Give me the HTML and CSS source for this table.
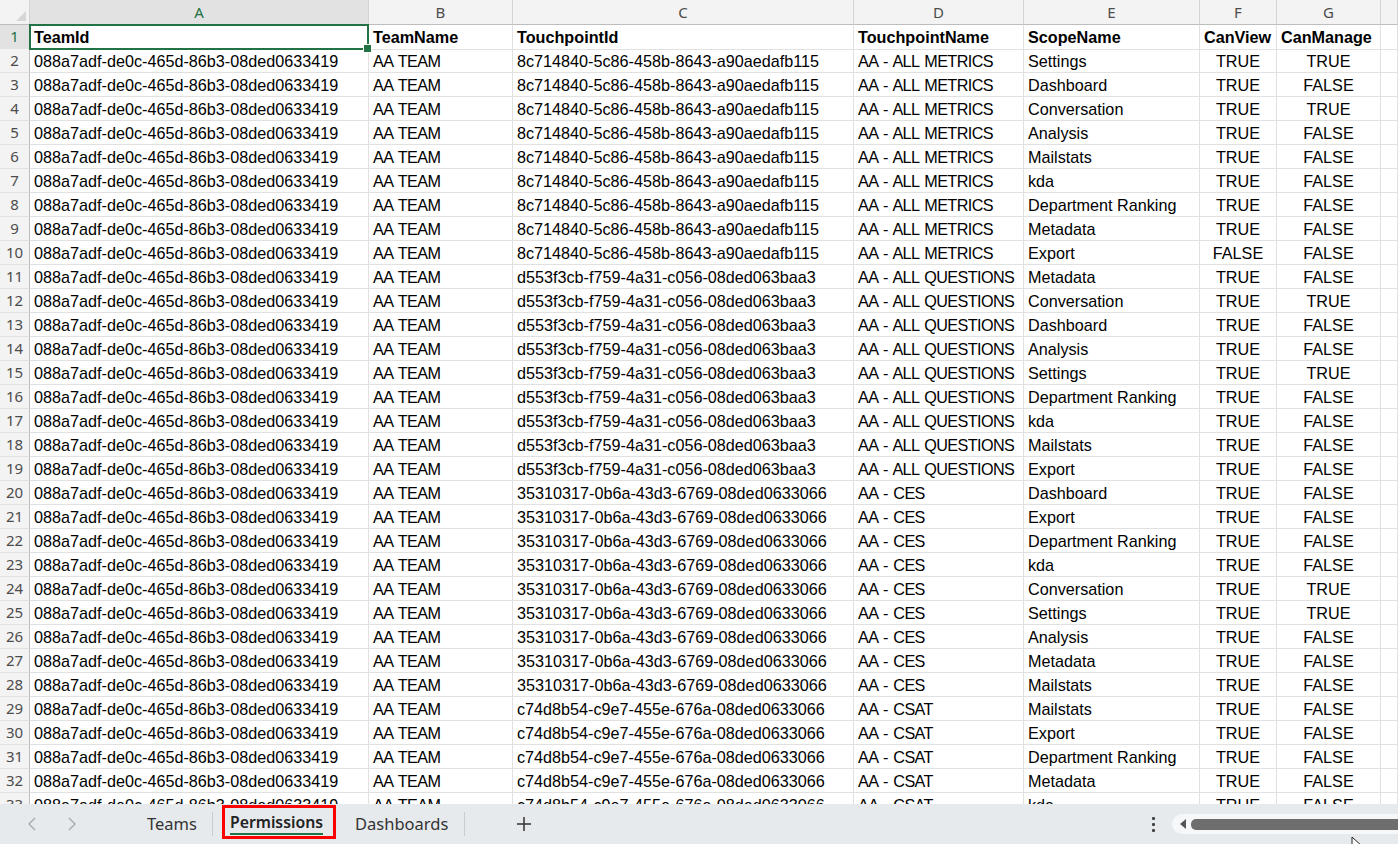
FILE: index.html
```html
<!DOCTYPE html>
<html lang="en">
<head>
<meta charset="utf-8">
<title>Permissions</title>
<link rel="stylesheet" href="styles.css">
</head>
<body>
<div class="app">
  <div class="sheet">
    <div class="row hdr">
      <div class="corner"><span class="tri"></span></div>
      <div class="ch sel">A</div><div class="ch">B</div><div class="ch">C</div><div class="ch">D</div><div class="ch">E</div><div class="ch">F</div><div class="ch">G</div><div class="ch"></div>
    </div>
    <div class="row"><div class="rh sel">1</div><div class="c b a1">TeamId</div><div class="c b">TeamName</div><div class="c b">TouchpointId</div><div class="c b">TouchpointName</div><div class="c b">ScopeName</div><div class="c b">CanView</div><div class="c b">CanManage</div><div class="c"></div></div>
    <div class="row"><div class="rh">2</div><div class="c">088a7adf-de0c-465d-86b3-08ded0633419</div><div class="c">AA TEAM</div><div class="c">8c714840-5c86-458b-8643-a90aedafb115</div><div class="c">AA - ALL METRICS</div><div class="c">Settings</div><div class="c m">TRUE</div><div class="c m">TRUE</div><div class="c"></div></div>
    <div class="row"><div class="rh">3</div><div class="c">088a7adf-de0c-465d-86b3-08ded0633419</div><div class="c">AA TEAM</div><div class="c">8c714840-5c86-458b-8643-a90aedafb115</div><div class="c">AA - ALL METRICS</div><div class="c">Dashboard</div><div class="c m">TRUE</div><div class="c m">FALSE</div><div class="c"></div></div>
    <div class="row"><div class="rh">4</div><div class="c">088a7adf-de0c-465d-86b3-08ded0633419</div><div class="c">AA TEAM</div><div class="c">8c714840-5c86-458b-8643-a90aedafb115</div><div class="c">AA - ALL METRICS</div><div class="c">Conversation</div><div class="c m">TRUE</div><div class="c m">TRUE</div><div class="c"></div></div>
    <div class="row"><div class="rh">5</div><div class="c">088a7adf-de0c-465d-86b3-08ded0633419</div><div class="c">AA TEAM</div><div class="c">8c714840-5c86-458b-8643-a90aedafb115</div><div class="c">AA - ALL METRICS</div><div class="c">Analysis</div><div class="c m">TRUE</div><div class="c m">FALSE</div><div class="c"></div></div>
    <div class="row"><div class="rh">6</div><div class="c">088a7adf-de0c-465d-86b3-08ded0633419</div><div class="c">AA TEAM</div><div class="c">8c714840-5c86-458b-8643-a90aedafb115</div><div class="c">AA - ALL METRICS</div><div class="c">Mailstats</div><div class="c m">TRUE</div><div class="c m">FALSE</div><div class="c"></div></div>
    <div class="row"><div class="rh">7</div><div class="c">088a7adf-de0c-465d-86b3-08ded0633419</div><div class="c">AA TEAM</div><div class="c">8c714840-5c86-458b-8643-a90aedafb115</div><div class="c">AA - ALL METRICS</div><div class="c">kda</div><div class="c m">TRUE</div><div class="c m">FALSE</div><div class="c"></div></div>
    <div class="row"><div class="rh">8</div><div class="c">088a7adf-de0c-465d-86b3-08ded0633419</div><div class="c">AA TEAM</div><div class="c">8c714840-5c86-458b-8643-a90aedafb115</div><div class="c">AA - ALL METRICS</div><div class="c">Department Ranking</div><div class="c m">TRUE</div><div class="c m">FALSE</div><div class="c"></div></div>
    <div class="row"><div class="rh">9</div><div class="c">088a7adf-de0c-465d-86b3-08ded0633419</div><div class="c">AA TEAM</div><div class="c">8c714840-5c86-458b-8643-a90aedafb115</div><div class="c">AA - ALL METRICS</div><div class="c">Metadata</div><div class="c m">TRUE</div><div class="c m">FALSE</div><div class="c"></div></div>
    <div class="row"><div class="rh">10</div><div class="c">088a7adf-de0c-465d-86b3-08ded0633419</div><div class="c">AA TEAM</div><div class="c">8c714840-5c86-458b-8643-a90aedafb115</div><div class="c">AA - ALL METRICS</div><div class="c">Export</div><div class="c m">FALSE</div><div class="c m">FALSE</div><div class="c"></div></div>
    <div class="row"><div class="rh">11</div><div class="c">088a7adf-de0c-465d-86b3-08ded0633419</div><div class="c">AA TEAM</div><div class="c">d553f3cb-f759-4a31-c056-08ded063baa3</div><div class="c">AA - ALL QUESTIONS</div><div class="c">Metadata</div><div class="c m">TRUE</div><div class="c m">FALSE</div><div class="c"></div></div>
    <div class="row"><div class="rh">12</div><div class="c">088a7adf-de0c-465d-86b3-08ded0633419</div><div class="c">AA TEAM</div><div class="c">d553f3cb-f759-4a31-c056-08ded063baa3</div><div class="c">AA - ALL QUESTIONS</div><div class="c">Conversation</div><div class="c m">TRUE</div><div class="c m">TRUE</div><div class="c"></div></div>
    <div class="row"><div class="rh">13</div><div class="c">088a7adf-de0c-465d-86b3-08ded0633419</div><div class="c">AA TEAM</div><div class="c">d553f3cb-f759-4a31-c056-08ded063baa3</div><div class="c">AA - ALL QUESTIONS</div><div class="c">Dashboard</div><div class="c m">TRUE</div><div class="c m">FALSE</div><div class="c"></div></div>
    <div class="row"><div class="rh">14</div><div class="c">088a7adf-de0c-465d-86b3-08ded0633419</div><div class="c">AA TEAM</div><div class="c">d553f3cb-f759-4a31-c056-08ded063baa3</div><div class="c">AA - ALL QUESTIONS</div><div class="c">Analysis</div><div class="c m">TRUE</div><div class="c m">FALSE</div><div class="c"></div></div>
    <div class="row"><div class="rh">15</div><div class="c">088a7adf-de0c-465d-86b3-08ded0633419</div><div class="c">AA TEAM</div><div class="c">d553f3cb-f759-4a31-c056-08ded063baa3</div><div class="c">AA - ALL QUESTIONS</div><div class="c">Settings</div><div class="c m">TRUE</div><div class="c m">TRUE</div><div class="c"></div></div>
    <div class="row"><div class="rh">16</div><div class="c">088a7adf-de0c-465d-86b3-08ded0633419</div><div class="c">AA TEAM</div><div class="c">d553f3cb-f759-4a31-c056-08ded063baa3</div><div class="c">AA - ALL QUESTIONS</div><div class="c">Department Ranking</div><div class="c m">TRUE</div><div class="c m">FALSE</div><div class="c"></div></div>
    <div class="row"><div class="rh">17</div><div class="c">088a7adf-de0c-465d-86b3-08ded0633419</div><div class="c">AA TEAM</div><div class="c">d553f3cb-f759-4a31-c056-08ded063baa3</div><div class="c">AA - ALL QUESTIONS</div><div class="c">kda</div><div class="c m">TRUE</div><div class="c m">FALSE</div><div class="c"></div></div>
    <div class="row"><div class="rh">18</div><div class="c">088a7adf-de0c-465d-86b3-08ded0633419</div><div class="c">AA TEAM</div><div class="c">d553f3cb-f759-4a31-c056-08ded063baa3</div><div class="c">AA - ALL QUESTIONS</div><div class="c">Mailstats</div><div class="c m">TRUE</div><div class="c m">FALSE</div><div class="c"></div></div>
    <div class="row"><div class="rh">19</div><div class="c">088a7adf-de0c-465d-86b3-08ded0633419</div><div class="c">AA TEAM</div><div class="c">d553f3cb-f759-4a31-c056-08ded063baa3</div><div class="c">AA - ALL QUESTIONS</div><div class="c">Export</div><div class="c m">TRUE</div><div class="c m">FALSE</div><div class="c"></div></div>
    <div class="row"><div class="rh">20</div><div class="c">088a7adf-de0c-465d-86b3-08ded0633419</div><div class="c">AA TEAM</div><div class="c">35310317-0b6a-43d3-6769-08ded0633066</div><div class="c">AA - CES</div><div class="c">Dashboard</div><div class="c m">TRUE</div><div class="c m">FALSE</div><div class="c"></div></div>
    <div class="row"><div class="rh">21</div><div class="c">088a7adf-de0c-465d-86b3-08ded0633419</div><div class="c">AA TEAM</div><div class="c">35310317-0b6a-43d3-6769-08ded0633066</div><div class="c">AA - CES</div><div class="c">Export</div><div class="c m">TRUE</div><div class="c m">FALSE</div><div class="c"></div></div>
    <div class="row"><div class="rh">22</div><div class="c">088a7adf-de0c-465d-86b3-08ded0633419</div><div class="c">AA TEAM</div><div class="c">35310317-0b6a-43d3-6769-08ded0633066</div><div class="c">AA - CES</div><div class="c">Department Ranking</div><div class="c m">TRUE</div><div class="c m">FALSE</div><div class="c"></div></div>
    <div class="row"><div class="rh">23</div><div class="c">088a7adf-de0c-465d-86b3-08ded0633419</div><div class="c">AA TEAM</div><div class="c">35310317-0b6a-43d3-6769-08ded0633066</div><div class="c">AA - CES</div><div class="c">kda</div><div class="c m">TRUE</div><div class="c m">FALSE</div><div class="c"></div></div>
    <div class="row"><div class="rh">24</div><div class="c">088a7adf-de0c-465d-86b3-08ded0633419</div><div class="c">AA TEAM</div><div class="c">35310317-0b6a-43d3-6769-08ded0633066</div><div class="c">AA - CES</div><div class="c">Conversation</div><div class="c m">TRUE</div><div class="c m">TRUE</div><div class="c"></div></div>
    <div class="row"><div class="rh">25</div><div class="c">088a7adf-de0c-465d-86b3-08ded0633419</div><div class="c">AA TEAM</div><div class="c">35310317-0b6a-43d3-6769-08ded0633066</div><div class="c">AA - CES</div><div class="c">Settings</div><div class="c m">TRUE</div><div class="c m">TRUE</div><div class="c"></div></div>
    <div class="row"><div class="rh">26</div><div class="c">088a7adf-de0c-465d-86b3-08ded0633419</div><div class="c">AA TEAM</div><div class="c">35310317-0b6a-43d3-6769-08ded0633066</div><div class="c">AA - CES</div><div class="c">Analysis</div><div class="c m">TRUE</div><div class="c m">FALSE</div><div class="c"></div></div>
    <div class="row"><div class="rh">27</div><div class="c">088a7adf-de0c-465d-86b3-08ded0633419</div><div class="c">AA TEAM</div><div class="c">35310317-0b6a-43d3-6769-08ded0633066</div><div class="c">AA - CES</div><div class="c">Metadata</div><div class="c m">TRUE</div><div class="c m">FALSE</div><div class="c"></div></div>
    <div class="row"><div class="rh">28</div><div class="c">088a7adf-de0c-465d-86b3-08ded0633419</div><div class="c">AA TEAM</div><div class="c">35310317-0b6a-43d3-6769-08ded0633066</div><div class="c">AA - CES</div><div class="c">Mailstats</div><div class="c m">TRUE</div><div class="c m">FALSE</div><div class="c"></div></div>
    <div class="row"><div class="rh">29</div><div class="c">088a7adf-de0c-465d-86b3-08ded0633419</div><div class="c">AA TEAM</div><div class="c">c74d8b54-c9e7-455e-676a-08ded0633066</div><div class="c">AA - CSAT</div><div class="c">Mailstats</div><div class="c m">TRUE</div><div class="c m">FALSE</div><div class="c"></div></div>
    <div class="row"><div class="rh">30</div><div class="c">088a7adf-de0c-465d-86b3-08ded0633419</div><div class="c">AA TEAM</div><div class="c">c74d8b54-c9e7-455e-676a-08ded0633066</div><div class="c">AA - CSAT</div><div class="c">Export</div><div class="c m">TRUE</div><div class="c m">FALSE</div><div class="c"></div></div>
    <div class="row"><div class="rh">31</div><div class="c">088a7adf-de0c-465d-86b3-08ded0633419</div><div class="c">AA TEAM</div><div class="c">c74d8b54-c9e7-455e-676a-08ded0633066</div><div class="c">AA - CSAT</div><div class="c">Department Ranking</div><div class="c m">TRUE</div><div class="c m">FALSE</div><div class="c"></div></div>
    <div class="row"><div class="rh">32</div><div class="c">088a7adf-de0c-465d-86b3-08ded0633419</div><div class="c">AA TEAM</div><div class="c">c74d8b54-c9e7-455e-676a-08ded0633066</div><div class="c">AA - CSAT</div><div class="c">Metadata</div><div class="c m">TRUE</div><div class="c m">FALSE</div><div class="c"></div></div>
    <div class="row"><div class="rh">33</div><div class="c">088a7adf-de0c-465d-86b3-08ded0633419</div><div class="c">AA TEAM</div><div class="c">c74d8b54-c9e7-455e-676a-08ded0633066</div><div class="c">AA - CSAT</div><div class="c">kda</div><div class="c m">TRUE</div><div class="c m">FALSE</div><div class="c"></div></div>
  </div>
  <div class="tabbar">
    <div class="nav">
      <svg class="arrow" width="8" height="14" viewBox="0 0 8 14"><path d="M7 1 L1 7 L7 13" fill="none" stroke="#a6a6a6" stroke-width="1.3"/></svg>
      <svg class="arrow" width="8" height="14" viewBox="0 0 8 14"><path d="M1 1 L7 7 L1 13" fill="none" stroke="#a6a6a6" stroke-width="1.3"/></svg>
    </div>
    <div class="tab">Teams</div>
    <div class="sep"></div>
    <div class="tab active"><span class="label">Permissions</span></div>
    <div class="tab dash">Dashboards</div>
    <div class="sep"></div>
    <div class="add">
      <svg width="16" height="16" viewBox="0 0 16 16"><path d="M8 1 V15 M1 8 H15" stroke="#333" stroke-width="1.5"/></svg>
    </div>
    <div class="right">
      <div class="more"><span></span><span></span><span></span></div>
      <div class="hscroll">
        <svg class="larr" width="6" height="10" viewBox="0 0 6 10"><path d="M6 0 L0 5 L6 10 Z" fill="#555"/></svg>
        <div class="thumb"></div>
      </div>
    </div>
    <svg class="cursor" width="14" height="20" viewBox="0 0 14 20"><path d="M1 1 L1 16 L5 12 L8 19 L10 18 L7 11 L12 11 Z" fill="#fff" stroke="#222" stroke-width="1"/></svg>
  </div>
</div>
</body>
</html>
```

FILE: styles.css
```css
* { box-sizing: border-box; margin: 0; padding: 0; }
html, body { width: 1398px; height: 844px; overflow: hidden; background: #fff; }
body { font-family: "Liberation Sans", Arial, sans-serif; }

.app { display: flex; flex-direction: column; height: 844px; position: relative; }

.sheet { height: 804px; overflow: hidden; flex: none; background: #fff; }

.row {
  display: grid;
  grid-template-columns: 30px 339px 144px 341px 170px 176px 77px 104px 1fr;
  height: 24px;
}
.row > div {
  border-right: 1px solid #e1e1e1;
  border-bottom: 1px solid #e1e1e1;
  white-space: nowrap;
  overflow: hidden;
}

/* column header row */
.hdr { height: 25px; }
.hdr > div {
  background: #f3f3f3;
  border-right-color: #d4d4d4;
  border-bottom-color: #bdbdbd;
}
.corner { position: relative; }
.tri {
  position: absolute;
  right: 3px;
  bottom: 3px;
  width: 0;
  height: 0;
  border-left: 10px solid transparent;
  border-bottom: 10px solid #d6d6d6;
}
.ch {
  font-family: "Noto Sans", "Open Sans", sans-serif;
  font-size: 15px;
  line-height: 24px;
  text-align: center;
  color: #4c4c4c;
}
.ch.sel { background: #e2e2e2; color: #217346; }

/* row header column */
.rh {
  background: #f3f3f3;
  font-family: "Noto Sans", "Open Sans", sans-serif;
  font-size: 15px;
  line-height: 23px;
  text-align: center;
  color: #4c4c4c;
}
.row > .rh { border-right-color: #bdbdbd; border-bottom-color: #e1e1e1; }
.rh.sel { background: #e2e2e2; color: #217346; }

/* cells */
.c {
  font-size: 16.2px;
  line-height: 23px;
  padding: 1px 0 0 4px;
  color: #000;
}
.b { font-weight: bold; }
.m { text-align: center; padding-left: 0; }
/* upper-case text columns (TeamName, TouchpointName) set a little tighter */
.row > .c:nth-child(3):not(.b),
.row > .c:nth-child(5):not(.b) { letter-spacing: -0.6px; word-spacing: 1.6px; }

.row > .a1 { position: relative; overflow: visible; }
.a1::after {
  content: "";
  position: absolute;
  left: -1px;
  top: -1px;
  right: -1px;
  bottom: -1px;
  border: 2px solid #217346;
  z-index: 2;
}
.a1::before {
  content: "";
  position: absolute;
  right: -4px;
  bottom: -4px;
  width: 7px;
  height: 7px;
  background: #217346;
  border: 1px solid #fff;
  z-index: 3;
}

/* sheet tab bar */
.tabbar {
  flex: 1;
  background: #e6eaed;
  display: flex;
  align-items: center;
  font-family: "Noto Sans", "Open Sans", sans-serif;
  font-size: 16.5px;
  color: #333;
}
.nav {
  width: 131px;
  display: flex;
  align-items: center;
  gap: 32px;
  padding-left: 28px;
}
.arrow { display: block; }
.tab { padding: 0 15px 0 16px; line-height: 30px; }
.sep { width: 1px; height: 24px; background: #c9cdd0; }
.tab.active {
  margin-left: 9px;
  margin-bottom: 4px;
  padding: 0 10px 0 5px;
  border: 3px solid #ff0000;
  height: 34px;
  display: flex;
  align-items: center;
  font-size: 15.8px;
  font-weight: 600;
  color: #222;
}
.label { border-bottom: 2px solid #217346; line-height: 22px; padding-top: 2px; }
.tab.dash { padding: 0 16px 0 19px; }
.add { margin-left: 51px; display: flex; align-items: center; }
.right { margin-left: auto; display: flex; align-items: center; }
.more { display: flex; flex-direction: column; gap: 3px; margin-right: 17px; }
.more span { width: 3px; height: 3px; background: #444; border-radius: 1px; }
.hscroll {
  width: 226px;
  height: 20px;
  background: #f5f7f8;
  border-radius: 10px 0 0 10px;
  display: flex;
  align-items: center;
  padding-left: 8px;
  gap: 5px;
}
.larr { display: block; }
.thumb { flex: 1; height: 11px; background: #6e6e6e; border-radius: 5px 0 0 5px; }
.cursor { position: absolute; left: 1351px; top: 836px; }
```
